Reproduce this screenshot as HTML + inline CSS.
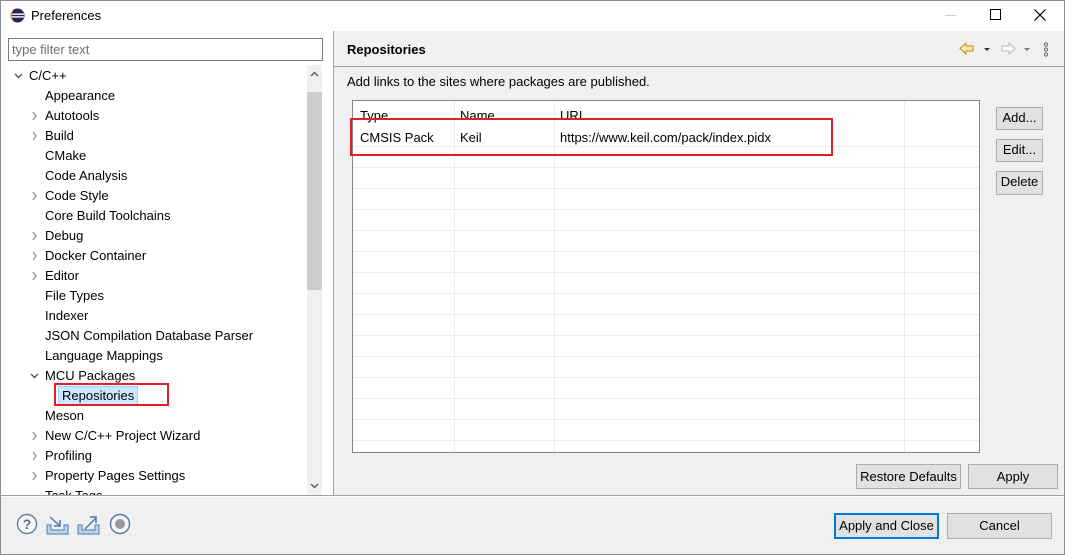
<!DOCTYPE html>
<html><head><meta charset="utf-8"><style>
*{box-sizing:border-box;margin:0;padding:0}
body{width:1065px;height:555px;overflow:hidden;background:#f0f0f0;font-family:"Liberation Sans","Noto Sans CJK SC",sans-serif;font-size:13px;color:#000;position:relative}
.a{position:absolute}
.win{left:0;top:0;width:1065px;height:555px;border:1px solid #8c8c8c}
.title{left:1px;top:1px;width:1063px;height:30px;background:#fff}
.btn{position:absolute;background:#e1e1e1;border:1px solid #adadad;text-align:center;line-height:20px;font-size:13px}
.tree div{position:absolute;height:20px;line-height:20px;white-space:nowrap}
</style></head><body>
<div class="a win"></div>
<div class="a title"></div>
<svg class="a" style="left:10px;top:8px" width="15" height="15" viewBox="0 0 15 15"><circle cx="7.5" cy="7.5" r="7" fill="#2c2255"/><rect x="1" y="5.5" width="13" height="1.4" fill="#fff"/><rect x="1" y="8.2" width="13" height="1.4" fill="#fff"/><path d="M3 2.5 A7 7 0 0 0 3 12.5" stroke="#f7941e" stroke-width="1" fill="none"/></svg>
<div class="a" style="left:31px;top:8px;font-size:13px">Preferences</div>
<div class="a" style="left:945px;top:15px;width:11px;height:1px;background:#ccc"></div>
<div class="a" style="left:990px;top:9px;width:11px;height:11px;border:1px solid #000"></div>
<svg class="a" style="left:1034px;top:9px" width="12" height="12"><path d="M0.5 0.5L11.5 11.5M11.5 0.5L0.5 11.5" stroke="#000" stroke-width="1.2"/></svg>

<div class="a" style="left:1px;top:31px;width:332px;height:464px;background:#fff"></div>
<div class="a" style="left:333px;top:31px;width:1px;height:464px;background:#a0a0a0"></div>
<div class="a" style="left:8px;top:38px;width:315px;height:23px;border:1px solid #7a7a7a;background:#fff;color:#6d6d6d;padding-left:3px;line-height:21px">type filter text</div>
<div class="a" style="left:307px;top:65px;width:15px;height:430px;background:#f0f0f0"></div>
<div class="a" style="left:307px;top:92px;width:15px;height:198px;background:#cdcdcd"></div>
<svg class="a" style="left:310px;top:71px" width="9" height="6"><path d="M1 5L4.5 1.5L8 5" stroke="#606060" stroke-width="1.5" fill="none"/></svg>
<svg class="a" style="left:310px;top:483px" width="9" height="6"><path d="M1 1L4.5 4.5L8 1" stroke="#606060" stroke-width="1.5" fill="none"/></svg>
<div class="a tree" style="left:0;top:66px;width:307px;height:429px;overflow:hidden">
<svg class="a" style="left:14px;top:7px" width="9" height="6"><path d="M1 1L4.5 4.5L8 1" stroke="#555" stroke-width="1.4" fill="none"/></svg>
<div style="left:29px;top:0">C/C++</div>
<div style="left:45px;top:20px">Appearance</div>
<div style="left:45px;top:40px">Autotools</div>
<div style="left:45px;top:60px">Build</div>
<div style="left:45px;top:80px">CMake</div>
<div style="left:45px;top:100px">Code Analysis</div>
<div style="left:45px;top:120px">Code Style</div>
<div style="left:45px;top:140px">Core Build Toolchains</div>
<div style="left:45px;top:160px">Debug</div>
<div style="left:45px;top:180px">Docker Container</div>
<div style="left:45px;top:200px">Editor</div>
<div style="left:45px;top:220px">File Types</div>
<div style="left:45px;top:240px">Indexer</div>
<div style="left:45px;top:260px">JSON Compilation Database Parser</div>
<div style="left:45px;top:280px">Language Mappings</div>
<div style="left:45px;top:300px">MCU Packages</div>
<div style="left:58px;top:320px;background:#cce8ff;border:1px solid #99d1ff;padding:0 3px;line-height:18px">Repositories</div>
<div style="left:45px;top:340px">Meson</div>
<div style="left:45px;top:360px">New C/C++ Project Wizard</div>
<div style="left:45px;top:380px">Profiling</div>
<div style="left:45px;top:400px">Property Pages Settings</div>
<div style="left:45px;top:420px">Task Tags</div>
<svg class="a" style="left:30px;top:307px" width="9" height="6"><path d="M1 1L4.5 4.5L8 1" stroke="#555" stroke-width="1.4" fill="none"/></svg>
</div>
<svg class="a" style="left:0;top:66px" width="45" height="429">
<g stroke="#999" stroke-width="1.4" fill="none">
<path d="M33 46l3 4l-3 4M33 66l3 4l-3 4M33 126l3 4l-3 4M33 166l3 4l-3 4M33 186l3 4l-3 4M33 206l3 4l-3 4M33 366l3 4l-3 4M33 386l3 4l-3 4M33 406l3 4l-3 4"/>
</g></svg>
<div class="a" style="left:54px;top:383px;width:115px;height:23px;border:2px solid #e41e26"></div>

<div class="a" style="left:334px;top:66px;width:730px;height:1px;background:#a0a0a0"></div>
<div class="a" style="left:347px;top:42px;font-weight:bold;font-size:13px">Repositories</div>
<svg class="a" style="left:958px;top:41px" width="80" height="16">
<path d="M2 7.5L8 2V5H15V10H8V13Z" fill="#fde9a8" stroke="#c98a10" stroke-width="1"/>
<path d="M26 7h6l-3 3z" fill="#333"/>
<path d="M57 7.5L51 2V5H44V10H51V13Z" fill="#fafafa" stroke="#bbb" stroke-width="1"/>
<path d="M66 7h6l-3 3z" fill="#777"/>
</svg>
<svg class="a" style="left:1043px;top:42px" width="6" height="15"><g fill="none" stroke="#666"><circle cx="3" cy="2.5" r="1.6"/><circle cx="3" cy="7.5" r="1.6"/><circle cx="3" cy="12.5" r="1.6"/></g></svg>
<div class="a" style="left:347px;top:74px">Add links to the sites where packages are published.</div>

<div class="a" style="left:352px;top:100px;width:628px;height:353px;border:1px solid #828790;background:#fff;overflow:hidden">
<div class="a" style="left:0;top:45px;width:626px;height:310px;background:repeating-linear-gradient(to bottom,#ececf0 0,#ececf0 1px,transparent 1px,transparent 21px)"></div>
<div class="a" style="left:101px;top:0;width:1px;height:351px;background:#ececf0"></div>
<div class="a" style="left:201px;top:0;width:1px;height:351px;background:#ececf0"></div>
<div class="a" style="left:551px;top:0;width:1px;height:351px;background:#ececf0"></div>
<div class="a" style="left:7px;top:7px">Type</div>
<div class="a" style="left:107px;top:7px">Name</div>
<div class="a" style="left:207px;top:7px">URI</div>
<div class="a" style="left:7px;top:29px">CMSIS Pack</div>
<div class="a" style="left:107px;top:29px">Keil</div>
<div class="a" style="left:207px;top:29px">https://www.keil.com/pack/index.pidx</div>
</div>
<div class="a" style="left:350px;top:118px;width:483px;height:38px;border:2px solid #e41e26"></div>

<div class="btn" style="left:996px;top:107px;width:47px;height:23px">Add...</div>
<div class="btn" style="left:996px;top:139px;width:47px;height:23px">Edit...</div>
<div class="btn" style="left:996px;top:171px;width:47px;height:24px">Delete</div>
<div class="btn" style="left:856px;top:464px;width:105px;height:25px;line-height:23px">Restore Defaults</div>
<div class="btn" style="left:968px;top:464px;width:90px;height:25px;line-height:23px">Apply</div>

<div class="a" style="left:1px;top:495px;width:1063px;height:1px;background:#a0a0a0"></div>
<div class="a" style="left:1px;top:496px;width:1063px;height:1px;background:#fff"></div>
<svg class="a" style="left:15px;top:513px" width="120" height="24">
<circle cx="12" cy="11" r="9.5" fill="#f4f6fa" stroke="#6a7f98" stroke-width="1.4"/>
<text x="12" y="16" font-family="Liberation Sans" font-size="14" font-weight="bold" fill="#5a6f88" text-anchor="middle">?</text>
<path d="M32 12v9h21v-9h-4v5h-13v-5z" fill="#bcd3ea" stroke="#4b78a8"/>
<path d="M35 4l10 9M45 7v6h-6" stroke="#4b78a8" stroke-width="1.5" fill="none"/>
<path d="M63 12v9h21v-9h-4v5h-13v-5z" fill="#bcd3ea" stroke="#4b78a8"/>
<path d="M70 16l11-11M75 4h6v6" stroke="#4b78a8" stroke-width="1.5" fill="none"/>
<circle cx="105" cy="11" r="9.5" fill="#f4f6fa" stroke="#4b78a8" stroke-width="1.4"/>
<circle cx="105" cy="11" r="5" fill="#9a9a9a"/>
</svg>
<div class="btn" style="left:834px;top:513px;width:105px;height:26px;border:2px solid #0078d7;line-height:22px">Apply and Close</div>
<div class="btn" style="left:947px;top:513px;width:105px;height:26px;line-height:24px">Cancel</div>
</body></html>
